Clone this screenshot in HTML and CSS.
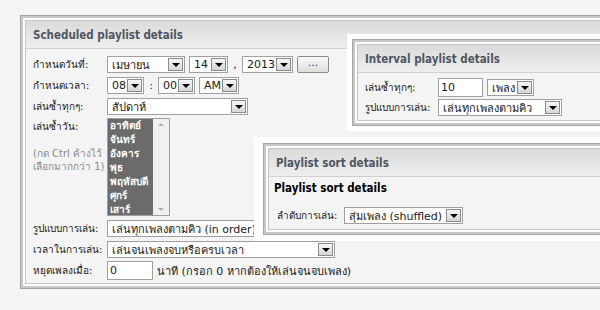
FILE: index.html
```html
<!DOCTYPE html>
<html lang="th">
<head>
    <title>Playlist details</title>
    <link rel="stylesheet" href="styles.css">
</head>
<body>
    <div class="desk">
        <!-- main window -->
        <div class="panel main">
            <div class="panel-in">
                <div class="head">Scheduled playlist details</div>
                <div class="form">
                    <div class="row">
                        <span class="label">กำหนดวันที่:</span>
                        <span class="sel w-month"><span class="val">เมษายน</span><span class="arrow"></span></span>
                        <span class="sel w-day"><span class="val">14</span><span class="arrow"></span></span>
                        <span class="sep">,</span>
                        <span class="sel w-year"><span class="val">2013</span><span class="arrow"></span></span>
                        <span class="btn">...</span>
                    </div>
                    <div class="row">
                        <span class="label">กำหนดเวลา:</span>
                        <span class="sel w-hour"><span class="val">08</span><span class="arrow"></span></span>
                        <span class="sep">:</span>
                        <span class="sel w-hour"><span class="val">00</span><span class="arrow"></span></span>
                        <span class="sel w-ampm"><span class="val">AM</span><span class="arrow"></span></span>
                    </div>
                    <div class="row">
                        <span class="label">เล่นซ้ำทุกๆ:</span>
                        <span class="sel w-repeat"><span class="val">สัปดาห์</span><span class="arrow"></span></span>
                    </div>
                    <div class="row top">
                        <div class="label">
                            เล่นซ้ำวัน:
                            <div class="hint">(กด Ctrl ค้างไว้<br>เลือกมากกว่า 1)</div>
                        </div>
                        <div class="listbox">
                            <ul class="items">
                                <li>อาทิตย์</li>
                                <li>จันทร์</li>
                                <li>อังคาร</li>
                                <li>พุธ</li>
                                <li>พฤหัสบดี</li>
                                <li>ศุกร์</li>
                                <li>เสาร์</li>
                            </ul>
                            <div class="scroll">
                                <span class="up"></span>
                                <span class="down"></span>
                            </div>
                        </div>
                    </div>
                    <div class="row">
                        <span class="label">รูปแบบการเล่น:</span>
                        <span class="sel w-wide"><span class="val">เล่นทุกเพลงตามคิว (in order)</span><span class="arrow"></span></span>
                    </div>
                    <div class="row">
                        <span class="label">เวลาในการเล่น:</span>
                        <span class="sel w-time"><span class="val">เล่นจนเพลงจบหรือครบเวลา</span><span class="arrow"></span></span>
                    </div>
                    <div class="row">
                        <span class="label">หยุดเพลงเมื่อ:</span>
                        <span class="input w-min">0</span>
                        <span class="note">นาที (กรอก 0 หากต้องให้เล่นจนจบเพลง)</span>
                    </div>
                </div>
            </div>
        </div>

        <!-- interval window -->
        <div class="backdrop interval">
            <div class="panel">
                <div class="panel-in">
                    <div class="head">Interval playlist details</div>
                    <div class="form">
                        <div class="row">
                            <span class="label">เล่นซ้ำทุกๆ:</span>
                            <span class="input w-count">10</span>
                            <span class="sel w-unit"><span class="val">เพลง</span><span class="arrow"></span></span>
                        </div>
                        <div class="row">
                            <span class="label">รูปแบบการเล่น:</span>
                            <span class="sel w-mode"><span class="val">เล่นทุกเพลงตามคิว</span><span class="arrow"></span></span>
                        </div>
                    </div>
                </div>
            </div>
        </div>

        <!-- sort window -->
        <div class="backdrop sort">
            <div class="panel">
                <div class="panel-in">
                    <div class="head">Playlist sort details</div>
                    <div class="subhead">Playlist sort details</div>
                    <div class="form">
                        <div class="row">
                            <span class="label">ลำดับการเล่น:</span>
                            <span class="sel w-sort"><span class="val">สุ่มเพลง (shuffled)</span><span class="arrow"></span></span>
                        </div>
                    </div>
                </div>
            </div>
        </div>
    </div>
</body>
</html>
```

FILE: styles.css
```css
body {
    margin: 0;
    background-color: #f4f4f4;
    font-family: Tahoma, "DejaVu Sans", "Noto Sans", sans-serif;
    font-size: 11px;
    color: #1a1a1a;
    overflow: hidden;
}
.desk {
    position: relative;
    width: 600px;
    height: 310px;
    padding: 15px 0 0 20px;
    box-sizing: border-box;
}

/* window frame */
.panel {
    border: 1px solid #a6a6a6;
    box-shadow: inset 0 0 0 2px #c8c8c8;
    padding: 4px;
    background-color: #fff;
}
.panel-in {
    border: 1px solid #c6c6c6;
    background-color: #f4f4f4;
}
.main {
    width: 620px;
    height: 264px;
}
.main .panel-in {
    height: 262px;
}
.head {
    height: 27px;
    line-height: 28px;
    padding-left: 7px;
    font-family: "DejaVu Sans Condensed", "DejaVu Sans", sans-serif;
    font-size: 11.5px;
    font-weight: bold;
    color: #4f5662;
    background: linear-gradient(#dadada, #eeeeee);
    border-bottom: 1px solid #cfcfcf;
}

/* form rows */
.form {
    padding: 7px 7px 0 7px;
    display: flex;
    flex-direction: column;
    gap: 4px;
}
.row {
    display: flex;
    align-items: center;
    gap: 4px;
    height: 17px;
    white-space: nowrap;
}
.row.top {
    align-items: flex-start;
    height: auto;
}
.label {
    width: 70px;
    flex-shrink: 0;
    font-size: 10px;
}
.hint {
    color: #8a8a8a;
    margin-top: 13px;
    line-height: 13px;
}
.sep {
    width: 6px;
    text-align: center;
}

.sel, .input {
    display: flex;
    align-items: center;
    height: 15px;
    border: 1px solid #a0a0a0;
    background-color: #fff;
    box-sizing: content-box;
    flex-shrink: 0;
}
.sel .val {
    flex: 1;
    padding-left: 4px;
    white-space: nowrap;
    overflow: hidden;
}
.input {
    padding-left: 2px;
}
.arrow {
    width: 13px;
    height: 11px;
    margin: 1px;
    border: 1px solid #8a8a8a;
    background: linear-gradient(#f6f6f6, #d6d6d6);
    display: flex;
    align-items: center;
    justify-content: center;
    flex-shrink: 0;
}
.arrow::after {
    content: "";
    border-left: 4px solid transparent;
    border-right: 4px solid transparent;
    border-top: 4px solid #000;
    margin-top: 1px;
}
.btn {
    width: 30px;
    height: 15px;
    border: 1px solid #8a8a8a;
    border-radius: 2px;
    background: linear-gradient(#fafafa, #dcdcdc);
    color: #2d3a8c;
    text-align: center;
    line-height: 12px;
}

.w-month { width: 76px; }
.w-day { width: 37px; }
.w-year { width: 49px; }
.w-hour { width: 35px; }
.w-ampm { width: 38px; }
.w-repeat { width: 139px; }
.w-wide { width: 300px; }
.w-time { width: 226px; }
.w-min { width: 42px; height: 17px; }
.w-count { width: 41px; height: 17px; }
.w-unit { width: 45px; }
.w-mode { width: 122px; }
.w-sort { width: 117px; }

/* multi-select list */
.listbox {
    display: flex;
    width: 61px;
    height: 96px;
    margin-top: -1px;
    border: 1px solid #a0a0a0;
    background-color: #fff;
}
.items {
    list-style: none;
    margin: 0;
    padding: 0;
    width: 45px;
    overflow: hidden;
    background-color: #6b6b6b;
    color: #fff;
    font-weight: bold;
    font-size: 10px;
}
.items li {
    height: 14px;
    line-height: 14px;
    padding-left: 2px;
}
.scroll {
    flex: 1;
    background-color: #f0f0f0;
    display: flex;
    flex-direction: column;
    justify-content: space-between;
    align-items: center;
    padding: 4px 0;
}
.scroll .up {
    border-left: 3px solid transparent;
    border-right: 3px solid transparent;
    border-bottom: 3px solid #b0b0b0;
}
.scroll .down {
    border-left: 3px solid transparent;
    border-right: 3px solid transparent;
    border-top: 3px solid #b0b0b0;
}

/* floating windows */
.backdrop {
    position: absolute;
    background-color: #fff;
}
.interval {
    left: 347px;
    top: 34px;
    width: 270px;
    padding: 5px 0 5px 5px;
}
.interval .form {
    padding: 6px 7px 4px 7px;
    gap: 3px;
}
.interval .label {
    width: 69px;
}
.sort {
    left: 254px;
    top: 137px;
    width: 360px;
    padding: 6px 0 6px 9px;
}
.subhead {
    font-family: "DejaVu Sans Condensed", "DejaVu Sans", sans-serif;
    font-size: 11.5px;
    font-weight: bold;
    color: #000;
    padding: 4px 0 0 5px;
    height: 20px;
}
.sort .form {
    padding: 6px 7px 5px 8px;
}
.sort .label {
    width: 63px;
}
```
